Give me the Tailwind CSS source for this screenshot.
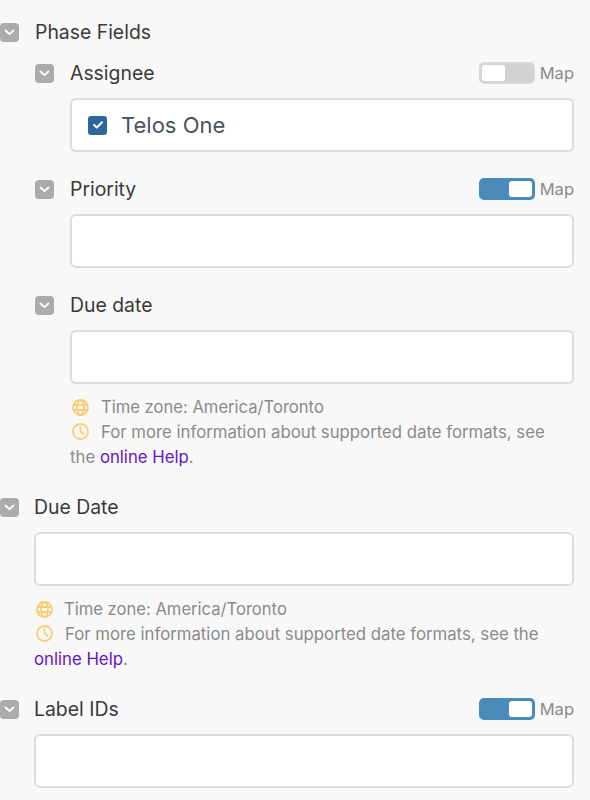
<!DOCTYPE html>
<html lang="en">
<head>
  <title>Phase Fields</title>
  <meta charset="utf-8">
  <script src="https://cdn.jsdelivr.net/npm/@tailwindcss/browser@4"></script>
</head>
<body class="bg-[#f8f8f8] font-['Inter',sans-serif] text-[#3a3a3a] w-[590px] h-[800px] overflow-hidden">
  <div class="pr-4 pt-[12px]">
    <div class="flex items-center h-[40px]">
      <div class="w-[19px] h-[19px] rounded-[4px] bg-[#ababab] flex items-center justify-center mr-[16px]">
        <svg width="11" height="7" viewBox="0 0 11 7" fill="none" stroke="#fff" stroke-width="1.8" stroke-linecap="round" stroke-linejoin="round"><path d="M1.5 1.5 5.5 5.2 9.5 1.5"/></svg>
      </div>
      <span class="text-[19.4px] pt-[2px]">Phase Fields</span>
    </div>

    <div class="pl-[35px]">
      <div class="flex items-center h-[40px] mt-[1px]">
        <div class="w-[19px] h-[19px] rounded-[4px] bg-[#ababab] flex items-center justify-center mr-[16px]">
          <svg width="11" height="7" viewBox="0 0 11 7" fill="none" stroke="#fff" stroke-width="1.8" stroke-linecap="round" stroke-linejoin="round"><path d="M1.5 1.5 5.5 5.2 9.5 1.5"/></svg>
        </div>
        <span class="text-[19.4px] pt-[2px]">Assignee</span>
        <div class="ml-auto flex items-center">
          <div class="w-[56px] h-[22px] rounded-[5px] bg-[#d2d2d2] border-[2px] border-[#d9d9d9] p-[1px] flex justify-start">
            <div class="w-[23px] h-[16px] bg-white rounded-[3px]"></div>
          </div>
          <span class="text-[16.5px] text-[#8a8a8a] ml-[5px]">Map</span>
        </div>
      </div>
      <div class="ml-[35px] mt-[5px] h-[54px] bg-white border-[2px] border-[#dcdcdc] rounded-[6px] flex items-center pl-[16px]">
        <div class="w-[19px] h-[19px] rounded-[3px] bg-[#2d659f] flex items-center justify-center mr-[14px]">
          <svg width="12" height="10" viewBox="0 0 12 10" fill="none" stroke="#fff" stroke-width="2" stroke-linecap="round" stroke-linejoin="round"><path d="M2 5 4.8 7.6 10 2.2"/></svg>
        </div>
        <span class="text-[22px] text-[#4a5260]">Telos One</span>
      </div>

      <div class="flex items-center h-[40px] mt-[17px]">
        <div class="w-[19px] h-[19px] rounded-[4px] bg-[#ababab] flex items-center justify-center mr-[16px]">
          <svg width="11" height="7" viewBox="0 0 11 7" fill="none" stroke="#fff" stroke-width="1.8" stroke-linecap="round" stroke-linejoin="round"><path d="M1.5 1.5 5.5 5.2 9.5 1.5"/></svg>
        </div>
        <span class="text-[19.4px] pt-[2px]">Priority</span>
        <div class="ml-auto flex items-center">
          <div class="w-[56px] h-[22px] rounded-[5px] bg-[#4a8bb9] border-[2px] border-[#4a8bb9] p-[1px] flex justify-end">
            <div class="w-[23px] h-[16px] bg-white rounded-[3px]"></div>
          </div>
          <span class="text-[16.5px] text-[#8a8a8a] ml-[5px]">Map</span>
        </div>
      </div>
      <div class="ml-[35px] mt-[5px] h-[54px] bg-white border-[2px] border-[#dcdcdc] rounded-[6px]"></div>

      <div class="flex items-center h-[40px] mt-[17px]">
        <div class="w-[19px] h-[19px] rounded-[4px] bg-[#ababab] flex items-center justify-center mr-[16px]">
          <svg width="11" height="7" viewBox="0 0 11 7" fill="none" stroke="#fff" stroke-width="1.8" stroke-linecap="round" stroke-linejoin="round"><path d="M1.5 1.5 5.5 5.2 9.5 1.5"/></svg>
        </div>
        <span class="text-[19.4px] pt-[2px]">Due date</span>
      </div>
      <div class="ml-[35px] mt-[5px] h-[54px] bg-white border-[2px] border-[#dcdcdc] rounded-[6px]"></div>
      <div class="ml-[35px] mt-[11px] text-[16.75px] leading-[25px] text-[#8a8a8a]">
        <div class="flex items-center">
          <svg class="mr-[12px] ml-[2px]" width="17" height="17" viewBox="0 0 17 17" fill="none" stroke="#f8cd74" stroke-width="1.8"><circle cx="8.5" cy="8.5" r="7.5"/><ellipse cx="8.5" cy="8.5" rx="3.4" ry="7.5"/><path d="M1.5 6H15.5M1.5 11H15.5"/></svg>
          <span class="text-[16.6px]">Time zone: America/Toronto</span>
        </div>
        <div>
          <svg class="inline-block mr-[12px] ml-[2px] align-[-2px]" width="17" height="17" viewBox="0 0 17 17" fill="none" stroke="#f8cd74" stroke-width="1.8" stroke-linecap="round"><circle cx="8.5" cy="8.5" r="7.5"/><path d="M8.5 4V8.5L11.5 11"/></svg>For more information about supported date formats, see<br>the <a class="text-[#6414c8]" href="#">online Help</a>.
        </div>
      </div>
    </div>

    <div class="flex items-center h-[40px] mt-[17px]">
      <div class="w-[19px] h-[19px] rounded-[4px] bg-[#ababab] flex items-center justify-center mr-[15px]">
        <svg width="11" height="7" viewBox="0 0 11 7" fill="none" stroke="#fff" stroke-width="1.8" stroke-linecap="round" stroke-linejoin="round"><path d="M1.5 1.5 5.5 5.2 9.5 1.5"/></svg>
      </div>
      <span class="text-[19.4px] pt-[2px]">Due Date</span>
    </div>
    <div class="ml-[34px] mt-[5px] h-[54px] bg-white border-[2px] border-[#dcdcdc] rounded-[6px]"></div>
    <div class="ml-[34px] mt-[11px] text-[16.75px] leading-[25px] text-[#8a8a8a]">
      <div class="flex items-center">
        <svg class="mr-[11px] ml-[2px]" width="17" height="17" viewBox="0 0 17 17" fill="none" stroke="#f8cd74" stroke-width="1.8"><circle cx="8.5" cy="8.5" r="7.5"/><ellipse cx="8.5" cy="8.5" rx="3.4" ry="7.5"/><path d="M1.5 6H15.5M1.5 11H15.5"/></svg>
        <span class="text-[16.6px]">Time zone: America/Toronto</span>
      </div>
      <div>
        <svg class="inline-block mr-[12px] ml-[2px] align-[-2px]" width="17" height="17" viewBox="0 0 17 17" fill="none" stroke="#f8cd74" stroke-width="1.8" stroke-linecap="round"><circle cx="8.5" cy="8.5" r="7.5"/><path d="M8.5 4V8.5L11.5 11"/></svg>For more information about supported date formats, see the <a class="text-[#6414c8]" href="#">online Help</a>.
      </div>
    </div>

    <div class="flex items-center h-[40px] mt-[17px]">
      <div class="w-[19px] h-[19px] rounded-[4px] bg-[#ababab] flex items-center justify-center mr-[15px]">
        <svg width="11" height="7" viewBox="0 0 11 7" fill="none" stroke="#fff" stroke-width="1.8" stroke-linecap="round" stroke-linejoin="round"><path d="M1.5 1.5 5.5 5.2 9.5 1.5"/></svg>
      </div>
      <span class="text-[19.4px] pt-[2px]">Label IDs</span>
      <div class="ml-auto flex items-center">
        <div class="w-[56px] h-[22px] rounded-[5px] bg-[#4a8bb9] border-[2px] border-[#4a8bb9] p-[1px] flex justify-end">
          <div class="w-[23px] h-[16px] bg-white rounded-[3px]"></div>
        </div>
        <span class="text-[16.5px] text-[#8a8a8a] ml-[5px]">Map</span>
      </div>
    </div>
    <div class="ml-[34px] mt-[5px] h-[54px] bg-white border-[2px] border-[#dcdcdc] rounded-[6px]"></div>
  </div>
</body>
</html>
